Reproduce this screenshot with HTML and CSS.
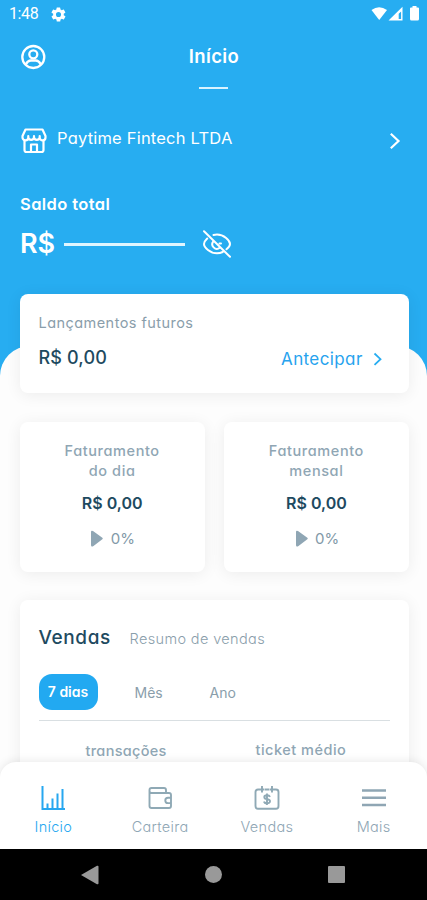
FILE: index.html
```html
<!DOCTYPE html>
<html lang="pt-BR">
<head>
<meta charset="utf-8">
<meta name="viewport" content="width=device-width, initial-scale=1">
<title>Início</title>
<link rel="stylesheet" href="styles.css">
</head>
<body>
<div class="phone">
  <div class="status">
    <span class="clock">1:48</span>
    <svg class="gear" width="17" height="17" viewBox="0 0 24 24"><path fill="#fff" fill-rule="evenodd" d="M19.4 13a7.700 7.700 0 0 0 0-2l2.100-1.600a.5.5 0 0 0 .1-.6l-2-3.500a.5.5 0 0 0-.6-.2l-2.500 1a7.300 7.300 0 0 0-1.700-1l-.4-2.600a.5.5 0 0 0-.5-.4h-4a.5.5 0 0 0-.5.400L9 5.100a7.700 7.700 0 0 0-1.700 1l-2.500-1a.5.5 0 0 0-.6.200l-2 3.500a.5.5 0 0 0 .1.600L4.500 11a8 8 0 0 0 0 2l-2.100 1.600a.5.5 0 0 0-.1.600l2 3.500c.1.200.4.300.6.200l2.500-1a7.300 7.300 0 0 0 1.700 1l.4 2.600c0 .2.200.4.500.4h4c.2 0 .5-.2.500-.4l.4-2.600a7.700 7.700 0 0 0 1.700-1l2.500 1c.2.100.5 0 .6-.2l2-3.500a.5.5 0 0 0-.1-.6zM12 15.600a3.600 3.600 0 1 1 0-7.200 3.600 3.600 0 0 1 0 7.200z"/></svg>
    <svg class="signals" width="49" height="16" viewBox="0 0 49 16" fill="#fff"><path d="M1.500 4Q9 -1.500 17 4L9.200 14z"/><path fill-rule="evenodd" d="M32.500 .8V14.500H18.500zM31.100 5.400l-2.400 2.400V13h2.400z"/><path d="M41 1.500h1.500V0h4v1.500H48q1 0 1 1V13q0 1.500-1.500 1.500h-6Q40 14.500 40 13V2.500q0-1 1-1z"/></svg>
  </div>
  <header class="top">
    <svg class="user" width="26" height="26" viewBox="0 0 26 26" fill="none" stroke="#fff" stroke-width="2.300"><circle cx="13.300" cy="13" r="11"/><circle cx="13.300" cy="10.300" r="4"/><path d="M5.800 20.500Q7.800 16.500 10.800 16.500h5Q18.800 16.500 20.800 20.500"/></svg>
    <h1 class="title">Início</h1>
  </header>
  <div class="dash"></div>
  <div class="company">
    <svg width="26" height="26" viewBox="0 0 26 26" fill="none" stroke="#fff" stroke-width="2.200" stroke-linejoin="round"><path d="M4.500 1.500h17l3 6.500v1.500a2.900 2.900 0 0 1-5.800 0V8v1.500a2.900 2.900 0 0 1-5.700 0V8v1.500a2.900 2.900 0 0 1-5.700 0V8v1.500a2.900 2.900 0 0 1-5.800 0V8z"/><path d="M3.500 12.500V22q0 2 2 2h15q2 0 2-2v-9.500M10 24v-7.500h6V24"/></svg>
    <span class="company-name">Paytime Fintech LTDA</span>
    <svg class="push" width="12" height="18" viewBox="0 0 12 18" fill="none" stroke="#fff" stroke-width="2.200"><path d="M1.800 1.800L9.500 9 1.800 16.200"/></svg>
  </div>
  <div class="balance-label">Saldo total</div>
  <div class="balance">
    <span class="currency">R$</span><span class="mask"></span>
    <svg width="30" height="30" viewBox="0 0 30 30" fill="none" stroke="#fff" stroke-width="2" stroke-linecap="round"><path d="M5.200 9.500Q2 12.500 2 15c0 3.500 6.200 9.300 13 9.300 2 0 4-.5 5.700-1.300M11.500 6Q13 5.600 15 5.600c7 0 13 5.900 13 9.400 0 1.700-1.400 3.700-3.500 5.300M11.300 12.300a4.600 4.600 0 0 0 6.400 6.500M17.500 14.500h1.500M2 2.200l26 25.600"/></svg>
  </div>

  <main class="sheet">
    <section class="card future">
      <div class="future-label">Lançamentos futuros</div>
      <div class="future-row">
        <span class="amount">R$ 0,00</span>
        <a class="advance"><span class="advance-text">Antecipar</span><svg width="10" height="14" viewBox="0 0 10 14" fill="none" stroke="#27adf1" stroke-width="1.800"><path d="M1.500 1.500L7.500 7.200 1.500 12.900"/></svg></a>
      </div>
    </section>
    <div class="pair">
      <section class="card bill">
        <div class="bill-label">Faturamento<br>do dia</div>
        <div class="bill-amount">R$ 0,00</div>
        <div class="pct"><svg width="12" height="17" viewBox="0 0 12 17"><path fill="#8fa6b4" d="M0 2Q0 0 2 1L11 7.500q1.500 1 0 2L2.500 16Q0 17.500 0 15z"/></svg><span>0%</span></div>
      </section>
      <section class="card bill">
        <div class="bill-label">Faturamento<br>mensal</div>
        <div class="bill-amount">R$ 0,00</div>
        <div class="pct"><svg width="12" height="17" viewBox="0 0 12 17"><path fill="#8fa6b4" d="M0 2Q0 0 2 1L11 7.500q1.500 1 0 2L2.500 16Q0 17.500 0 15z"/></svg><span>0%</span></div>
      </section>
    </div>
    <section class="card sales">
      <div class="sales-head"><h2 class="sales-title">Vendas</h2><span class="sales-sub">Resumo de vendas</span></div>
      <div class="tabs"><span class="tab active">7 dias</span><span class="tab month">Mês</span><span class="tab year">Ano</span></div>
      <div class="columns"><span class="col-a">transações</span><span class="col-b">ticket médio</span></div>
    </section>
  </main>

  <nav class="nav">
    <a class="item on"><svg width="26" height="26" viewBox="0 0 26 26" fill="none" stroke="#27a7f0" stroke-width="2"><path d="M2.500 1v23H25M7.500 24v-5.500M12.500 24V13.500M17.500 24V8.500M22.500 24V4"/></svg><span>Início</span></a>
    <a class="item"><svg width="26" height="26" viewBox="0 0 26 26" fill="none" stroke="#8fa9b5" stroke-width="1.900" stroke-linejoin="round"><path d="M2.500 5.500v15.500q0 2 2 2H22q2 0 2-2V10q0-2-2-2H4.500q-2 0-2-2V5q0-2 2-2H17q2 0 2 2v3M24 12.700h-3a2.700 2.700 0 0 0 0 5.400h3"/></svg><span>Carteira</span></a>
    <a class="item"><svg width="26" height="26" viewBox="0 0 26 26" fill="none" stroke="#8fa9b5" stroke-width="1.900"><path d="M5 4.500H4q-2.500 0-2.500 2.500v14Q1.500 23.800 4 23.800h18q2.500 0 2.500-2.800V7Q24.500 4.500 22 4.500h-1M10.500 4.500h5M8 1v6.500M18 1v6.500M5 4.500h5M16 4.500h5M16 11.800q-.7-1.600-3-1.600-2.700 0-2.700 1.900t2.700 2q3 .2 3 2.200t-3 2q-2.600 0-3-1.800M13 8.500v11.500"/></svg><span>Vendas</span></a>
    <a class="item"><svg width="26" height="26" viewBox="0 0 26 26" fill="none" stroke="#8fa6b4" stroke-width="2.400"><path d="M1 5.500h24M1 12.700h24M1 20h24"/></svg><span>Mais</span></a>
  </nav>
  <div class="system">
    <svg width="18" height="20" viewBox="0 0 18 20"><path fill="#999" d="M0 10L16 .8q1.500-.6 1.500 1v16.400q0 1.600-1.500 1z"/></svg>
    <span class="home"></span>
    <span class="recent"></span>
  </div>
</div>
</body>
</html>
```
FILE: styles.css
```css
* { box-sizing: border-box; }
body { margin: 0; background: #fff; }
.phone {
  width: 427px; height: 900px; overflow: hidden; background: #27adf1; color: #fff;
  display: flex; flex-direction: column;
  font-family: Inter, "Open Sans", sans-serif; font-feature-settings: "cv11" 1;
}
svg { display: block; flex: none; }
.status { height: 28px; flex: none; display: flex; align-items: center; padding: 0 8px 0 9px; }
.clock { font: 16px/28px Roboto, sans-serif; letter-spacing: -.4px; width: 41px; }
.signals { margin-left: auto; }
.top { height: 56px; flex: none; display: grid; grid-template-columns: 60px 1fr 60px; align-items: start; padding-top: 16px; }
.user { margin-left: 20px; }
.title { margin: 1px 0 0 1px; text-align: center; font-size: 18.5px; line-height: 22px; font-weight: 600; letter-spacing: .35px; }
.dash { flex: none; width: 29px; height: 2px; background: #d9f3ff; margin: 3px 0 0 199px; }
.company { flex: none; height: 28px; margin: 36px 26px 0 21px; display: flex; align-items: center; padding-top: 3px; }
.company-name { font-size: 16.5px; line-height: 20px; margin: -5px 0 0 10px; letter-spacing: .2px; }
.push { margin-left: auto; }
.balance-label { flex: none; margin: 41px 0 0 20px; height: 20px; font-size: 16.5px; line-height: 20px; font-weight: 600; letter-spacing: .4px; }
.balance { flex: none; height: 34px; margin: 13px 0 0 20px; display: flex; align-items: center; }
.currency { width: 44px; font-size: 27px; line-height: 34px; font-weight: 600; }
.mask { width: 121px; height: 3px; background: #dff5ff; margin-right: 17px; }
.sheet { flex: 1; min-height: 0; margin-top: 85px; border-radius: 30px 30px 0 0; background: #fdfdfd; padding: 0 18px 0 19.5px; }
.card { background: #fff; border-radius: 8px; box-shadow: 0 2px 16px rgba(0, 0, 0, .07); }
.future { margin-top: -52px; height: 99px; padding: 19px 26px 0 19px; }
.future-label { font-size: 14.5px; line-height: 20px; color: #8a9eab; letter-spacing: .45px; }
.future-row { display: flex; justify-content: space-between; padding-top: 12px; }
.amount { font-size: 18px; line-height: 26px; font-weight: 500; color: #1e4a60; letter-spacing: .15px; }
.advance { display: flex; align-items: center; color: #27a3ee; padding-top: 2px; }
.advance-text { width: 92px; font-size: 17px; line-height: 24px; letter-spacing: .4px; }
.pair { display: grid; grid-template-columns: 1fr 1fr; gap: 19px; margin-top: 29px; }
.bill { height: 150px; padding-top: 19px; text-align: center; }
.bill-label { font-size: 14.5px; line-height: 20px; font-weight: 500; color: #8fa6b4; letter-spacing: .6px; }
.bill-amount { font-size: 16px; line-height: 22px; font-weight: 600; color: #1e4a60; margin-top: 11px; }
.pct { display: flex; justify-content: center; align-items: center; gap: 7.5px; margin: 13px 0 0 2px; height: 22px; font-size: 15px; color: #8299a8; }
.sales { height: 200px; margin-top: 28px; padding: 26px 19px 0; }
.sales-head { display: flex; align-items: baseline; height: 24px; }
.sales-title { margin: 0; width: 91px; font-size: 19px; line-height: 24px; font-weight: 500; color: #1e4a60; letter-spacing: .6px; }
.sales-sub { font-size: 14.5px; font-weight: 300; color: #8a9eab; letter-spacing: .37px; }
.tabs { display: flex; align-items: flex-end; height: 71px; padding-bottom: 10px; border-bottom: 1.5px solid #d9dfe2; }
.tab { font-size: 14px; line-height: 35px; color: #8a9eab; }
.active { width: 59px; height: 36px; border-radius: 13px; background: #22a9f1; color: #fff; font-weight: 600; text-align: center; }
.month { margin-left: 37px; width: 75px; }
.columns { display: flex; color: #8fa6b4; font-size: 14.5px; line-height: 20px; font-weight: 500; padding-top: 19px; }
.col-a { width: 170px; padding: 1px 0 0 47px; letter-spacing: .3px; }
.col-b { margin-left: 47px; letter-spacing: .5px; }
.nav { position: relative; flex: none; height: 87px; margin-top: -16px; border-radius: 16px 16px 0 0; background: #fff; box-shadow: 0 -1px 10px rgba(0, 0, 0, .09); display: grid; grid-template-columns: repeat(4, 1fr); padding-top: 23px; }
.item { display: flex; flex-direction: column; align-items: center; gap: 6px; font-size: 14.5px; line-height: 20px; font-weight: 300; color: #8fa6b4; letter-spacing: .3px; }
.on { color: #27a7f0; }
.system { position: relative; flex: none; height: 51px; background: #000; display: flex; align-items: center; padding: 0 82px 0 81px; justify-content: space-between; }
.home { width: 17px; height: 17px; border-radius: 50%; background: #999; }
.recent { width: 17px; height: 17px; border-radius: 1px; background: #999; }
```
